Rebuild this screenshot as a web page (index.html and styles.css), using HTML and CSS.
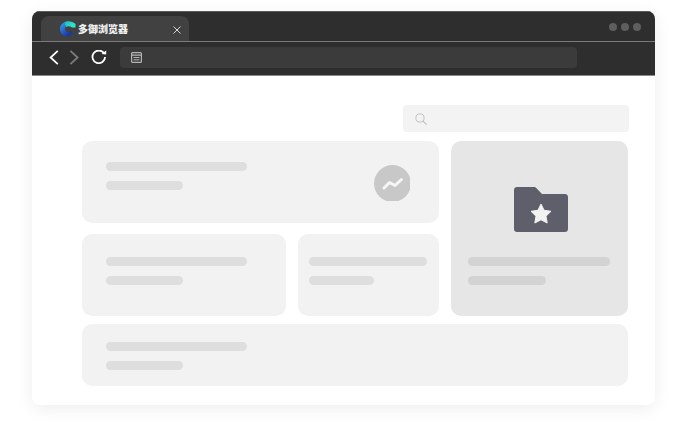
FILE: index.html
```html
<!DOCTYPE html>
<html lang="zh">
<head>
<meta charset="utf-8">
<title>多御浏览器</title>
<link rel="stylesheet" href="styles.css">
</head>
<body>
<div class="window">
  <div class="titlebar">
    <div class="tab">
      <svg class="logo" width="16" height="16" viewBox="0 0 16 16">
        <defs>
          <linearGradient id="lg1" x1="0" y1="0" x2="1" y2="0.4"><stop offset="0" stop-color="#1fb4c8"/><stop offset="1" stop-color="#2ee8c6"/></linearGradient>
          <linearGradient id="lg2" x1="0.2" y1="0" x2="0.8" y2="1"><stop offset="0" stop-color="#2f9cf0"/><stop offset="1" stop-color="#1c2fa8"/></linearGradient>
        </defs>
        <path d="M4 1.500 C7 -0.500 11.500 -0.500 15.500 3 L15.500 6.500 L12 6.500 C10 4.800 7.800 4.800 6 6 Z" fill="url(#lg1)"/>
        <path d="M4 1.500 C1 3 0 6 0 8 C0 11.500 2.500 14.500 6.500 15.500 L9 12 C6.500 11.200 4.600 9.500 5 7.800 C5.200 6.800 5.500 6.300 6 6 Z" fill="url(#lg2)"/>
        <path d="M6.500 15.500 C9.500 16 11.800 14.500 12.800 12 L10.800 9.500 L9 12 Z" fill="#1a3a9e"/>
      </svg>
      <span class="tab-title">多御浏览器</span>
      <svg class="close" width="8" height="8" viewBox="0 0 8 8"><path d="M0.500 0.500 L7.500 7.500 M7.500 0.500 L0.500 7.500" stroke="#d8d8d8" stroke-width="1" fill="none"/></svg>
    </div>
    <div class="dots"><i class="dot"></i><i class="dot"></i><i class="dot"></i></div>
  </div>
  <div class="toolbar">
    <svg class="nav" width="10" height="15" viewBox="0 0 10 15"><path d="M8.800 0.800 L1.600 7.500 L8.800 14.200" stroke="#fff" stroke-width="1.800" fill="none"/></svg>
    <svg class="nav" width="10" height="15" viewBox="0 0 10 15"><path d="M1.400 0.800 L8.600 7.500 L1.400 14.200" stroke="#7c7c7c" stroke-width="1.800" fill="none"/></svg>
    <svg class="reload" width="16" height="15" viewBox="0 0 16 15"><path d="M13 3.300 A6.300 6.300 0 1 0 14.100 7" stroke="#fff" stroke-width="1.800" fill="none"/><path d="M10.500 4 L15.200 4.600 L15.200 0.400 Z" fill="#fff"/></svg>
    <div class="address">
      <svg width="11" height="11" viewBox="0 0 11 11"><rect x="0.600" y="0.600" width="9.800" height="9.800" rx="1" stroke="#b5b5b5" stroke-width="1.200" fill="none"/><path d="M0.600 3.200 H10.400" stroke="#b5b5b5" stroke-width="1.200" fill="none"/><path d="M2.500 5.500 H8.500 M2.500 7.800 H8.500" stroke="#b5b5b5" fill="none"/></svg>
    </div>
  </div>
  <div class="content">
    <div class="search-row">
      <div class="search">
        <svg width="12" height="12" viewBox="0 0 14 14"><circle cx="5.800" cy="5.800" r="4.800" stroke="#bdbdbd" stroke-width="1.100" fill="none"/><path d="M9.400 9.400 L13.500 13.500" stroke="#bdbdbd" stroke-width="1.300" fill="none"/></svg>
      </div>
    </div>
    <div class="grid">
      <div class="card card-wide">
        <div class="lines"><div class="bar bar-long"></div><div class="bar bar-short"></div></div>
        <svg class="trend" width="36" height="36" viewBox="0 0 36 36"><circle cx="18.500" cy="18.500" r="18.500" fill="#c8c8c8"/><path d="M10 23 L15.500 17.500 L21 20.500 L27.500 14.500" stroke="#f6f6f6" stroke-width="3" fill="none" stroke-linejoin="round" stroke-linecap="round"/></svg>
      </div>
      <div class="card card-tall">
        <svg class="folder" width="54" height="45" viewBox="0 0 54 45"><path d="M3 0 H20 C21 0 21.500 .3 22 .8 L28 7 H51 C52.700 7 54 8.300 54 10 V42 C54 43.700 52.700 45 51 45 H3 C1.300 45 0 43.700 0 42 V3 C0 1.300 1.300 0 3 0 Z" fill="#5f5f6b"/><path d="M27 17 L30.100 23.300 L37 24.300 L32 29.200 L33.200 36 L27 32.800 L20.800 36 L22 29.200 L17 24.300 L23.900 23.300 Z" fill="#f2f2f2" stroke="#f2f2f2" stroke-width="1" stroke-linejoin="round"/></svg>
        <div class="lines"><div class="bar bar-long"></div><div class="bar bar-short"></div></div>
      </div>
      <div class="card card-low">
        <div class="lines"><div class="bar bar-long"></div><div class="bar bar-short"></div></div>
      </div>
      <div class="card card-low card-narrow">
        <div class="lines"><div class="bar bar-fill"></div><div class="bar bar-mini"></div></div>
      </div>
    </div>
    <div class="card card-bottom">
      <div class="lines"><div class="bar bar-long"></div><div class="bar bar-short"></div></div>
    </div>
  </div>
</div>
</body>
</html>
```
FILE: styles.css
```css
* { box-sizing: border-box; }
html, body { margin: 0; height: 100%; background: #fff; overflow: hidden; }
body { padding: 11px 32px 0; }
.window {
  width: 623px;
  height: 394px;
  border-radius: 8px;
  background: #fff;
  box-shadow: 0 4px 18px rgba(0, 0, 0, 0.07);
  overflow: hidden;
  display: flex;
  flex-direction: column;
}
.titlebar {
  height: 31px;
  flex: none;
  background: #2e2e2e;
  border-top: 1px solid #5a5a5a;
  border-bottom: 1px solid #7a7a7a;
  padding: 4px 14px 0 9px;
  display: flex;
  justify-content: space-between;
}
.tab {
  width: 148px;
  height: 25px;
  background: #414141;
  border-radius: 8px 8px 0 0;
  display: flex;
  align-items: center;
  padding: 0 8px 0 19px;
}
.logo { flex: none; }
.tab-title {
  margin-left: 2px;
  font: 900 10px/1 "Noto Sans CJK SC", sans-serif;
  color: #f2f2f2;
  flex: 1;
  white-space: nowrap;
}
.close { flex: none; margin-top: 2px; }
.dots { display: flex; gap: 4px; padding-top: 7px; }
.dot { width: 8px; height: 8px; border-radius: 50%; background: #5e5e5e; display: block; }
.toolbar {
  height: 34px;
  flex: none;
  background: #2e2e2e;
  border-bottom: 1px solid #8a8a8a;
  display: flex;
  align-items: center;
  padding: 0 78px 2px 17px;
}
.nav { flex: none; margin-right: 10px; }
.reload { flex: none; margin-left: 2px; }
.address {
  flex: 1;
  height: 21px;
  margin-left: 13px;
  background: #3b3b3b;
  border-radius: 4px;
  display: flex;
  align-items: center;
  padding-left: 11px;
}
.content { flex: 1; padding: 29px 27px 0 50px; }
.search-row { display: flex; justify-content: flex-end; margin-right: -1px; }
.search {
  width: 226px;
  height: 27px;
  background: #f3f3f3;
  border-radius: 4px;
  display: flex;
  align-items: center;
  padding-left: 12px;
}
.grid {
  display: grid;
  width: 546px;
  grid-template-columns: 204px 141px 177px;
  grid-template-rows: 82px 82px;
  column-gap: 12px;
  row-gap: 11px;
  margin-top: 9px;
}
.card {
  background: #f2f2f2;
  border-radius: 10px;
  padding: 24px;
}
.card-wide {
  grid-column: 1 / 3;
  display: flex;
  justify-content: space-between;
  padding-right: 29px;
  padding-top: 21px;
}
.card-tall {
  grid-column: 3;
  grid-row: 1 / 3;
  background: #e6e6e6;
  padding: 46px 17px 0;
  display: flex;
  flex-direction: column;
}
.card-low { padding-top: 23px; }
.card-narrow { padding-left: 11px; padding-right: 11px; }
.card-bottom { width: 546px; height: 62px; margin-top: 8px; padding-top: 18px; }
.trend { flex: none; margin-top: 3px; }
.folder { flex: none; align-self: center; margin-bottom: 25px; margin-left: 3px; }
.lines { display: flex; flex-direction: column; gap: 10px; }
.bar { height: 9px; border-radius: 5px; background: #dedede; }
.bar-long { width: 141px; }
.bar-short { width: 77px; }
.bar-fill { width: 118px; }
.bar-mini { width: 65px; }
.card-tall .bar { background: #d3d3d3; }
.card-tall .bar-long { width: 142px; }
.card-tall .bar-short { width: 78px; }
```
